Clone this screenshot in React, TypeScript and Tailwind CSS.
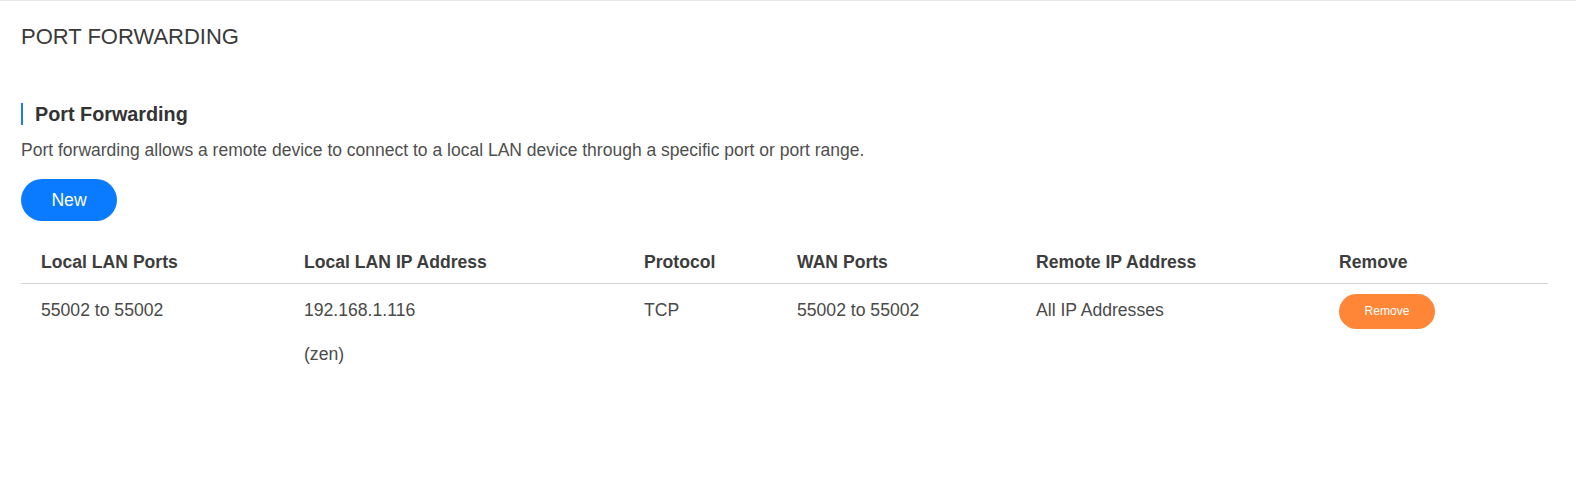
import React from 'react';

type Rule = {
  lanPorts: string;
  lanIp: string;
  device: string;
  protocol: string;
  wanPorts: string;
  remoteIp: string;
};

const rules: Rule[] = [
  {
    lanPorts: '55002 to 55002',
    lanIp: '192.168.1.116',
    device: '(zen)',
    protocol: 'TCP',
    wanPorts: '55002 to 55002',
    remoteIp: 'All IP Addresses',
  },
];

const columns = ['Local LAN Ports', 'Local LAN IP Address', 'Protocol', 'WAN Ports', 'Remote IP Address', 'Remove'];

export default function App() {
  return (
    <div className="min-h-[500px] bg-white border-t border-[#e6e6ea] pt-[21px] pl-[21px] pr-[28px] font-['Liberation_Sans',Arial,sans-serif]">
      {/* Page title */}
      <h1 className="text-[22px] leading-[30px] text-[#3a3a3a] font-normal">PORT FORWARDING</h1>

      {/* Section header */}
      <div className="mt-[51px] border-l-2 border-[#1a7cf5] pl-[12px] h-[22px]">
        <h2 className="text-[19.8px] leading-[22px] font-bold text-[#333]">Port Forwarding</h2>
      </div>
      <p className="mt-[13px] text-[17.5px] leading-[24px] text-[#4f4f4f]">
        Port forwarding allows a remote device to connect to a local LAN device through a specific port or port range.
      </p>

      <button className="mt-[17px] w-[96px] h-[42px] rounded-full bg-[#0a7bff] text-white text-[17.6px] flex items-center justify-center">
        New
      </button>

      {/* Rules table */}
      <div className="mt-[20px]">
        <div className="grid grid-cols-[263px_340px_153px_239px_303px_1fr] border-b border-[#d6d6d6]">
          {columns.map((c) => (
            <div key={c} className="pl-[20px] pt-[9px] pb-[9px] text-[17.6px] leading-[24px] font-bold text-[#3d3d3d]">
              {c}
            </div>
          ))}
        </div>
        {rules.map((r, i) => (
          <div
            key={i}
            className="grid grid-cols-[263px_340px_153px_239px_303px_1fr] pt-[10px] text-[17.6px] leading-[32px] text-[#4a4a4a]"
          >
            <div className="pl-[20px]">{r.lanPorts}</div>
            <div className="pl-[20px]">
              <div>{r.lanIp}</div>
              <div className="mt-[16px] leading-[24px]">{r.device}</div>
            </div>
            <div className="pl-[20px]">{r.protocol}</div>
            <div className="pl-[20px]">{r.wanPorts}</div>
            <div className="pl-[20px]">{r.remoteIp}</div>
            <div className="pl-[20px]">
              <button className="w-[96px] h-[35px] rounded-full bg-[#ff8537] text-white text-[12.1px] leading-none flex items-center justify-center">
                Remove
              </button>
            </div>
          </div>
        ))}
      </div>
    </div>
  );
}
